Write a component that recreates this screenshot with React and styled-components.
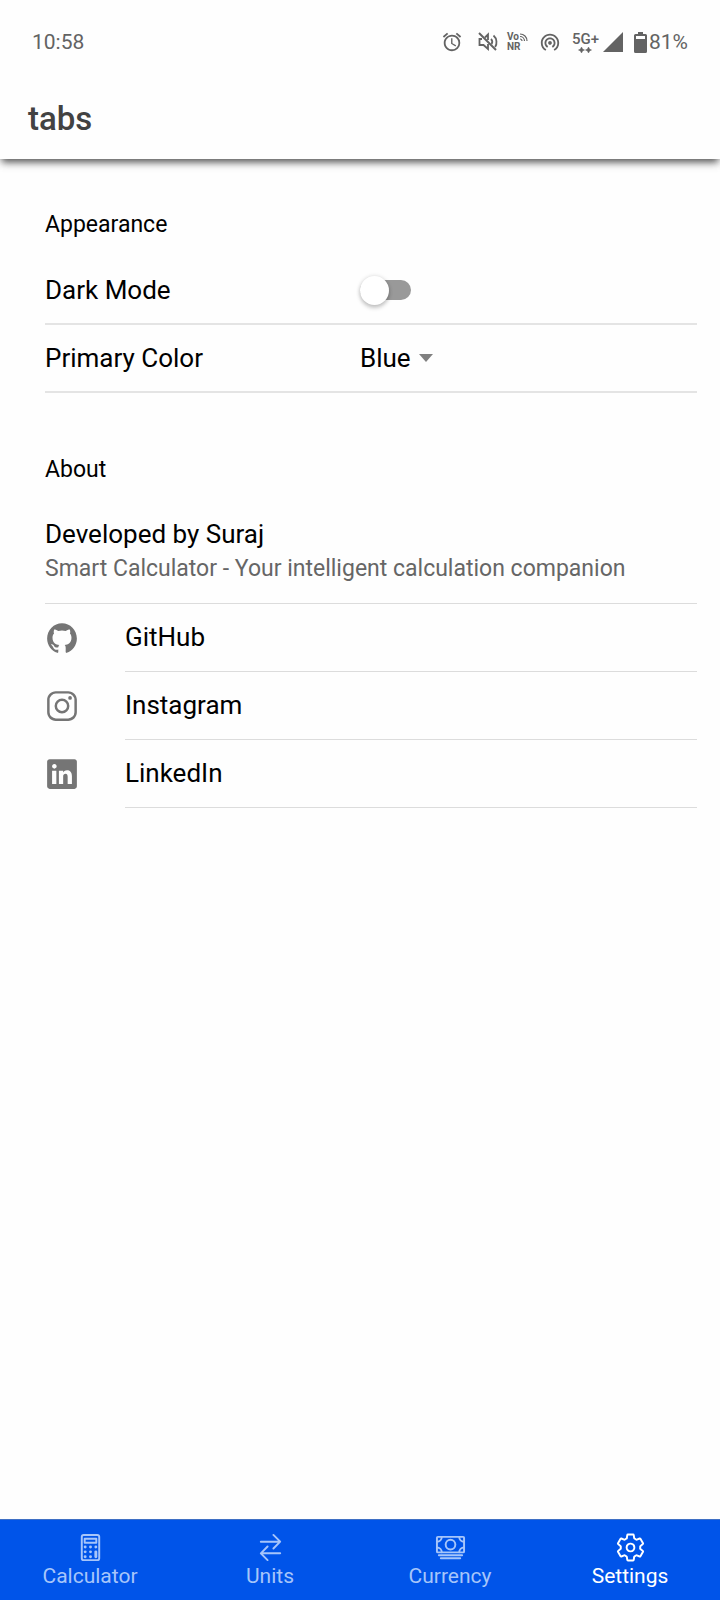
import React, { useState } from "react";
import styled, { createGlobalStyle } from "styled-components";
import {
  IoLogoGithub,
  IoLogoInstagram,
  IoLogoLinkedin,
  IoCalculatorOutline,
  IoSwapHorizontalOutline,
  IoCashOutline,
  IoSettingsOutline,
} from "react-icons/io5";
import { MdAlarm, MdWifiTethering } from "react-icons/md";

const GlobalStyle = createGlobalStyle`
  *, *::before, *::after { box-sizing: border-box; }
  body {
    margin: 0;
    background: #fefefe;
    color: #000;
    font-family: Roboto, "Liberation Sans", sans-serif;
    font-size: 26px;
  }
  svg { display: block; flex: none; }
`;

const Screen = styled.div`
  display: flex;
  flex-direction: column;
  min-height: 100vh;
`;

const Header = styled.header`
  background: #fefefe;
  box-shadow: 0 5px 7px -2px rgba(0, 0, 0, 0.6), 0 4px 10px rgba(0, 0, 0, 0.15);
`;

const StatusBar = styled.div`
  display: flex;
  align-items: center;
  justify-content: space-between;
  height: 84px;
  padding: 0 32px;
  color: #636363;
  font-size: 21px;
`;

const StatusIcons = styled.div`
  display: flex;
  align-items: center;
`;

const StatusItem = styled.span`
  display: flex;
  margin-left: ${(p) => p.$gap}px;
`;

const StackedLabel = styled.span`
  display: flex;
  flex-direction: column;
  align-items: ${(p) => (p.$center ? "center" : "flex-start")};
  margin-left: ${(p) => p.$gap}px;
  font-weight: ${(p) => (p.$center ? 500 : 700)};
  font-size: ${(p) => (p.$center ? 15 : 10)}px;
  line-height: ${(p) => (p.$center ? 16 : 10)}px;
`;

const VoLine = styled.span`
  display: flex;
  align-items: center;
`;

const Title = styled.h1`
  margin: 0;
  padding: 0 28px;
  height: 75px;
  font-size: 33px;
  font-weight: 500;
  line-height: 70px;
  color: #424242;
`;

const Content = styled.main`
  flex: 1;
  padding: 34px 23px 44px 45px;
`;

const Section = styled.section`
  & + & { margin-top: 45px; }
`;

const SectionTitle = styled.h2`
  margin: 0;
  font-size: 23px;
  font-weight: 400;
  line-height: 64px;
`;

const SettingRow = styled.div`
  display: flex;
  align-items: center;
  height: 68px;
  border-bottom: 2px solid #e4e4e4;
`;

const SettingLabel = styled.label`
  width: calc(50vw - 45px);
`;

const Toggle = styled.input`
  appearance: none;
  display: flex;
  align-items: center;
  width: 51px;
  height: 20px;
  margin: 0;
  border-radius: 10px;
  background: #999;
  cursor: pointer;

  &::before {
    content: "";
    width: 29px;
    height: 29px;
    flex: none;
    border-radius: 50%;
    background: #fff;
    box-shadow: 0 3px 4px rgba(0, 0, 0, 0.2), 0 0 4px rgba(0, 0, 0, 0.14);
  }

  &:checked { background: #80aaf8; justify-content: flex-end; }
  &:checked::before { background: #0054e9; }
`;

const SelectBox = styled.span`
  display: flex;
  align-items: center;
  gap: 8px;
`;

const Select = styled.select`
  appearance: none;
  border: 0;
  padding: 0;
  background: transparent;
  color: inherit;
  font: inherit;
`;

const Developer = styled.div`
  padding: 15px 0 16px;
  border-bottom: 1px solid #dcdcdc;
`;

const DeveloperName = styled.h3`
  margin: 0;
  font-size: 26px;
  font-weight: 400;
  line-height: 34px;
`;

const Tagline = styled.p`
  margin: 0;
  font-size: 23px;
  line-height: 36px;
  color: #666;
`;

const LinkRow = styled.a`
  display: flex;
  align-items: center;
  height: 68px;
  color: inherit;
  text-decoration: none;
`;

const LinkIcon = styled.span`
  width: 80px;
  color: #757575;
`;

const LinkText = styled.span`
  flex: 1;
  line-height: 67px;
  border-bottom: 1px solid #dcdcdc;
`;

const TabBar = styled.nav`
  position: sticky;
  bottom: 0;
  display: flex;
  height: 81px;
  border-top: 1px solid #3f6fc4;
  background: #0054e9;
`;

const Tab = styled.button`
  flex: 1;
  display: flex;
  flex-direction: column;
  align-items: center;
  border: 0;
  padding: 12px 0 0;
  background: transparent;
  color: ${(p) => (p.$active ? "#fff" : "#a6c5fa")};
  font: 400 21px/26px Roboto, sans-serif;
  cursor: pointer;
`;

const MuteIcon = () => (
  <svg width="22" height="22" viewBox="0 0 22 22" fill="none" stroke="currentColor" strokeWidth="1.8">
    <path d="M2 2l17 17" strokeWidth="2" />
    <path d="M5 8H2.500v6h4l4.500 4V13M8 6.500l3-3V9" />
    <path d="M14 8c1.500 1.500 1.500 3.500.6 5M16.500 4.500c3.500 3 3.800 8.500 1.600 11.500" />
  </svg>
);

const WavesIcon = () => (
  <svg width="9" height="9" viewBox="0 0 9 9" fill="none" stroke="currentColor" strokeWidth="1.2">
    <path d="M1 1c4 0 7 3 7 7M1 3.500c2.500 0 4.500 2 4.500 4.500M1 6c1.200 0 2 .8 2 2" />
  </svg>
);

const DataArrowsIcon = () => (
  <svg width="14" height="6" viewBox="0 0 14 6" fill="currentColor">
    <path d="M3.500 0l1 2 2 1-2 1-1 2-1-2-2-1 2-1zM10.500 0l1 2 2 1-2 1-1 2-1-2-2-1 2-1z" stroke="currentColor" strokeWidth=".5" />
  </svg>
);

const SignalIcon = () => (
  <svg width="20" height="20" viewBox="0 0 20 20" fill="currentColor">
    <path d="M20 0v20H0z" />
  </svg>
);

const BatteryIcon = () => (
  <svg width="13" height="21" viewBox="0 0 13 21" fill="currentColor">
    <path
      fillRule="evenodd"
      d="M4 0h5v2h2.500Q13 2 13 3.500v16q0 1.500-1.500 1.500h-10Q0 21 0 19.500v-16Q0 2 1.500 2H4zM2 4v3h9V4z"
    />
  </svg>
);

const CaretIcon = () => (
  <svg width="14" height="8" viewBox="0 0 14 8" fill="#808080" aria-hidden="true">
    <path d="M0 0h14L7 8z" />
  </svg>
);

const links = [
  { name: "GitHub", Icon: IoLogoGithub },
  { name: "Instagram", Icon: IoLogoInstagram },
  { name: "LinkedIn", Icon: IoLogoLinkedin },
];

const tabs = [
  { name: "Calculator", Icon: IoCalculatorOutline },
  { name: "Units", Icon: IoSwapHorizontalOutline },
  { name: "Currency", Icon: IoCashOutline },
  { name: "Settings", Icon: IoSettingsOutline },
];

export default function App() {
  const [dark, setDark] = useState(false);
  const [active, setActive] = useState("Settings");

  return (
    <Screen>
      <GlobalStyle />
      <Header>
        <StatusBar>
          <span>10:58</span>
          <StatusIcons>
            <MdAlarm size={22} />
            <StatusItem $gap={14}><MuteIcon /></StatusItem>
            <StackedLabel $gap={8}>
              <VoLine>Vo<WavesIcon /></VoLine>
              <span>NR</span>
            </StackedLabel>
            <StatusItem $gap={11}><MdWifiTethering size={22} /></StatusItem>
            <StackedLabel $gap={11} $center>
              5G+
              <DataArrowsIcon />
            </StackedLabel>
            <StatusItem $gap={4}><SignalIcon /></StatusItem>
            <StatusItem $gap={11}><BatteryIcon /></StatusItem>
            <StatusItem $gap={2}>81%</StatusItem>
          </StatusIcons>
        </StatusBar>
        <Title>tabs</Title>
      </Header>

      <Content>
        <Section>
          <SectionTitle>Appearance</SectionTitle>
          <SettingRow>
            <SettingLabel htmlFor="dark-mode">Dark Mode</SettingLabel>
            <Toggle
              id="dark-mode"
              type="checkbox"
              role="switch"
              checked={dark}
              onChange={(e) => setDark(e.target.checked)}
            />
          </SettingRow>
          <SettingRow>
            <SettingLabel htmlFor="primary-color">Primary Color</SettingLabel>
            <SelectBox>
              <Select id="primary-color" defaultValue="Blue">
                <option>Blue</option>
              </Select>
              <CaretIcon />
            </SelectBox>
          </SettingRow>
        </Section>

        <Section>
          <SectionTitle>About</SectionTitle>
          <Developer>
            <DeveloperName>Developed by Suraj</DeveloperName>
            <Tagline>Smart Calculator - Your intelligent calculation companion</Tagline>
          </Developer>
          {links.map(({ name, Icon }) => (
            <LinkRow key={name} href={`#${name.toLowerCase()}`}>
              <LinkIcon><Icon size={34} /></LinkIcon>
              <LinkText>{name}</LinkText>
            </LinkRow>
          ))}
        </Section>
      </Content>

      <TabBar>
        {tabs.map(({ name, Icon }) => (
          <Tab key={name} $active={name === active} onClick={() => setActive(name)}>
            <Icon size={31} />
            {name}
          </Tab>
        ))}
      </TabBar>
    </Screen>
  );
}
